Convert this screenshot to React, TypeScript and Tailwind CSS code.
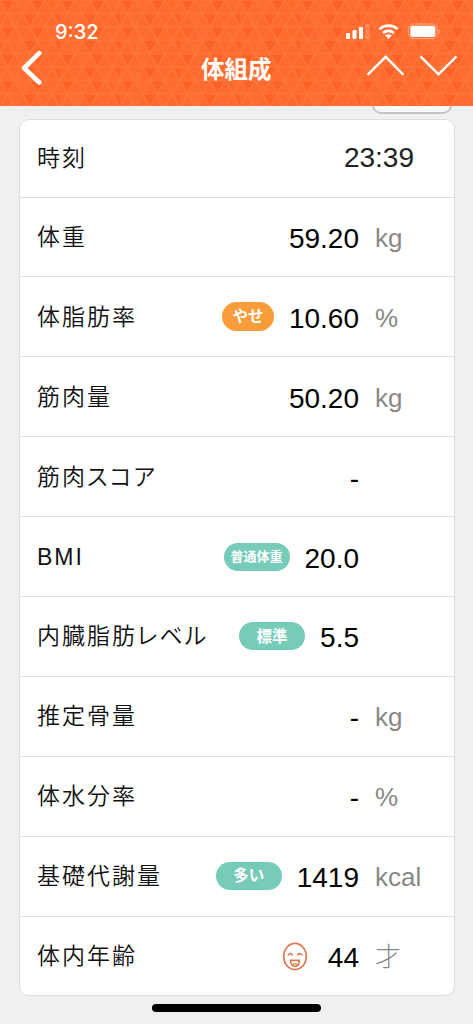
// App.tsx

import React from 'react'

type Row = {
  label: string
  value: string
  unit?: string
  badge?: string
  badgeStyle?: string
  face?: boolean
}

const rows: Row[] = [
  { label: '体重', value: '59.20', unit: 'kg' },
  { label: '体脂肪率', value: '10.60', unit: '%', badge: 'やせ', badgeStyle: 'w-[52px] h-[29px] bg-[#f99d3a] text-[15.5px]' },
  { label: '筋肉量', value: '50.20', unit: 'kg' },
  { label: '筋肉スコア', value: '-' },
  { label: 'BMI', value: '20.0', badge: '普通体重', badgeStyle: 'w-[66px] h-7 bg-[#76cbb9] text-[13px]' },
  { label: '内臓脂肪レベル', value: '5.5', badge: '標準', badgeStyle: 'w-[66px] h-7 bg-[#76cbb9] text-[15.5px]' },
  { label: '推定骨量', value: '-', unit: 'kg' },
  { label: '体水分率', value: '-', unit: '%' },
  { label: '基礎代謝量', value: '1419', unit: 'kcal', badge: '多い', badgeStyle: 'w-[66px] h-7 bg-[#76cbb9] text-[15.5px]' },
  { label: '体内年齢', value: '44', unit: '才', face: true },
]

const Pattern = () => (
  <svg className="absolute inset-0 -z-10 w-full h-full">
    <defs>
      <pattern id="triangles" width="60" height="26.8" patternUnits="userSpaceOnUse">
        <rect width="60" height="26.8" fill="#fe6b2d" />
        <path d="M0 0h15L7.5 13.4zM30 0h15l-7.5 13.4zM22.5 13.4h15L30 26.8zM52.5 13.4h7.5v13.4z" fill="#fc6225" />
        <path d="M15 13.4L22.5 0 30 13.4zM7.5 26.8L15 13.4l7.5 13.4z" fill="#fe6c2e" />
        <path
          d="M0 0h60M0 13.4h60M0 26.8h60M0 0l15 26.8L30 0l15 26.8L60 0M0 26.8L15 0l15 26.8L45 0l15 26.8"
          fill="none"
          stroke="#ff763e"
          strokeWidth="1.4"
        />
      </pattern>
    </defs>
    <rect width="100%" height="100%" fill="url(#triangles)" />
  </svg>
)

const StatusIcons = () => (
  <svg className="w-[100px] h-5" viewBox="0 0 100 20" fill="#fff">
    <rect x="1" y="13" width="4" height="6" rx="1" />
    <rect x="7.5" y="10" width="4" height="9" rx="1" />
    <rect x="14" y="7" width="4" height="12" rx="1" />
    <rect x="20.5" y="4" width="4" height="15" rx="1" opacity=".22" />
    <g fill="none" stroke="#fff" strokeWidth="2.7">
      <path d="M34.5 9.2a13 13 0 0 1 18 0" />
      <path d="M38 13a8.2 8.2 0 0 1 11 0" />
    </g>
    <path d="M40.2 15.6a5 5 0 0 1 6.6 0L43.5 19z" />
    <rect x="63.6" y="4" width="28.5" height="14.6" rx="4.2" fill="none" stroke="#fff" opacity=".4" />
    <rect x="65.3" y="5.7" width="25" height="11.2" rx="2.5" />
    <path d="M93.6 9v5c1.8-.8 1.8-4.2 0-5z" opacity=".4" />
  </svg>
)

const Face = () => (
  <svg className="w-[26px] h-[29px] mr-[5px] mt-px" viewBox="0 0 26 29" fill="none" stroke="#dd7950" strokeWidth="1.7" strokeLinecap="round">
    <ellipse cx="13" cy="14.5" rx="11.3" ry="13.1" />
    <path d="M6.3 12.8c.8-1.5 3.2-1.5 4 0M15.7 12.8c.8-1.5 3.2-1.5 4 0" />
    <path d="M8.6 18.3h8.8c0 3.5-1.8 6.1-4.4 6.1s-4.4-2.6-4.4-6.1z" strokeLinejoin="round" />
    <path d="M10.8 22.6c1.1-1.2 3.3-1.2 4.4 0" strokeWidth="1.2" />
  </svg>
)

const Header = () => (
  <header className="relative z-10 isolate h-[106px] overflow-hidden text-white">
    <Pattern />
    <div className="flex items-start justify-between pt-5 pl-[55px] pr-[28px] h-[49px]">
      <span className="font-['Inter'] text-[20px] leading-6 font-medium">9:32</span>
      <StatusIcons />
    </div>
    <div className="flex items-start">
      <div className="w-[201px] pl-5">
        <svg className="w-6 h-9" viewBox="0 0 24 36" fill="none" stroke="#fff" strokeWidth="4.6" strokeLinecap="round" strokeLinejoin="round">
          <path d="M19.3 4.2L4.2 19l15.1 14.5" />
        </svg>
      </div>
      <h1 className="pt-[5px] text-[23.5px] leading-8 font-bold">体組成</h1>
      <div className="flex flex-1 justify-end pr-3">
        <svg className="w-[96px] h-9" viewBox="0 0 96 36" fill="none" stroke="#fff" strokeWidth="2.5">
          <path d="M2.5 25.8L20.7 7.8l17.8 18M55.5 7.3l18 18 18-18" />
        </svg>
      </div>
    </div>
  </header>
)

const App = () => {
  return (
    <main className="flex flex-col w-full h-[1024px] overflow-hidden bg-[#f0f0f0] text-[#111] font-['Liberation_Sans','Noto_Sans_CJK_JP',sans-serif]">
      <Header />
      {/* lower edge of the button scrolled under the header */}
      <div className="shrink-0 self-end mr-[21px] -mt-5 w-[80px] h-7 rounded-[9px] border-2 border-[#c4c4c4] bg-white" />
      <section className="shrink-0 mt-[4.5px] ml-[19px] w-[436px] h-[877.5px] rounded-[10px] border-[1.5px] border-[#dedede] bg-white">
        <div className="flex justify-between h-[78px] pl-[17px] pr-[40px] border-b-[1.5px] border-[#dedede]">
          <span className="pt-[20px] text-[23px] leading-9 font-[350] tracking-[2px]">時刻</span>
          <span className="pt-[20px] text-[28px] leading-9 text-[#222]">23:39</span>
        </div>
        {rows.map((row) => (
          <div key={row.label} className="flex items-center h-[79.9px] pl-[17px] border-b-[1.5px] border-[#dedede] last:border-b-0">
            <span className="flex-1 whitespace-nowrap text-[23px] leading-9 font-[350] tracking-[2px] [font-feature-settings:'palt']">{row.label}</span>
            {row.badge && (
              <span className={`flex items-center justify-center rounded-full whitespace-nowrap font-bold text-white ${row.badgeStyle}`}>
                {row.badge}
              </span>
            )}
            {row.face && <Face />}
            <span className="ml-[15px] pt-[4px] text-[28px] leading-9 text-black">{row.value}</span>
            <span className="w-[79px] ml-[16px] pt-[2px] text-[26px] leading-9 font-light text-[#888]">{row.unit}</span>
          </div>
        ))}
      </section>
      <div className="shrink-0 self-center mt-2 w-[169px] h-[8px] rounded-full bg-black" />
    </main>
  )
}

export default App
